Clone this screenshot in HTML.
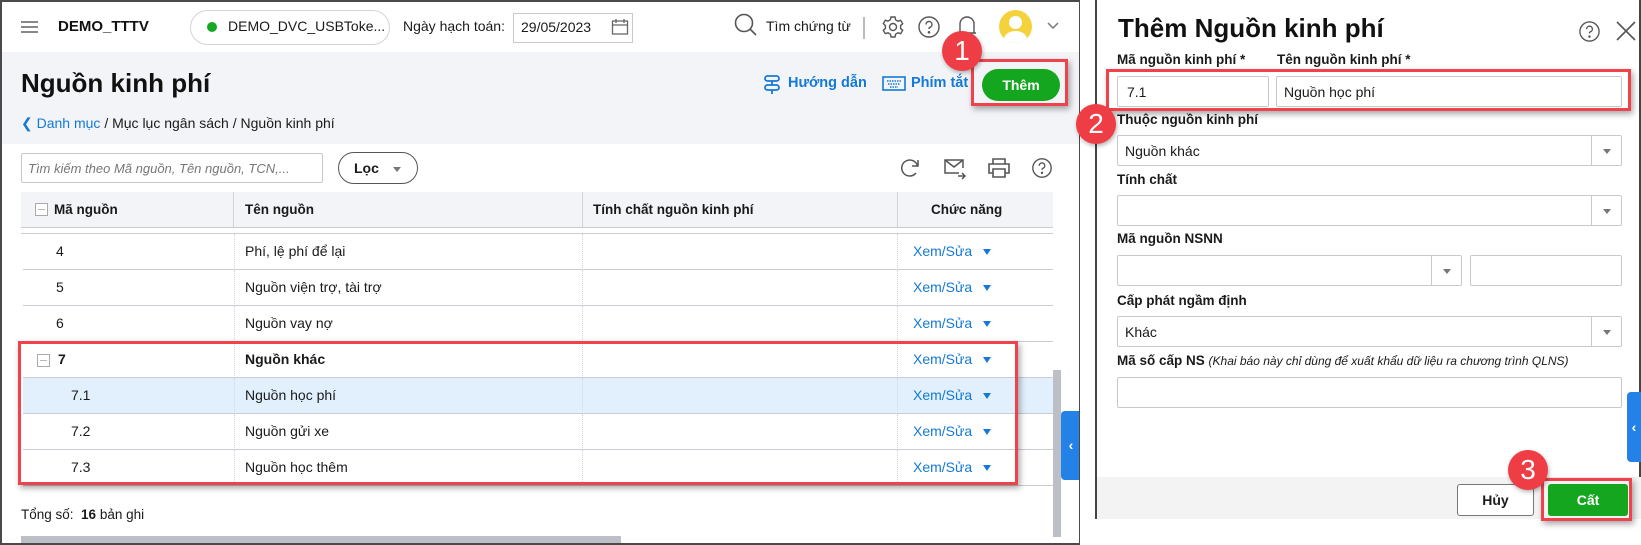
<!DOCTYPE html>
<html><head><meta charset="utf-8"><style>
*{box-sizing:border-box;margin:0;padding:0}
body{width:1641px;height:545px;background:#fff;font-family:"Liberation Sans",sans-serif;color:#1a1a1a;position:relative;overflow:hidden;font-size:14px}
.a{position:absolute}
.lp{left:0;top:0;width:1080px;height:545px;border:2px solid #4a4a4a;border-right:1px solid #4a4a4a;overflow:hidden;background:#fff}
.t{white-space:nowrap}
.row{position:absolute;left:21px;width:1030px;height:36px;border-bottom:1px solid #c9ccd3}
.row span{position:absolute;top:9px;white-space:nowrap}
.xs{color:#1479d6;left:890px}
.tri{position:absolute;left:960px;top:15px;width:0;height:0;border-left:4px solid transparent;border-right:4px solid transparent;border-top:6px solid #1479d6}
.vl{position:absolute;top:0;height:36px;border-left:1px dotted #d4d6db}
.inp{position:absolute;border:1px solid #c7c9ce;background:#fff;border-radius:2px}
.lbl{position:absolute;font-weight:bold;font-size:13.5px;white-space:nowrap}
.dd{position:absolute;right:0;top:0;bottom:0;width:30px;border-left:1px solid #c7c9ce}
.dd:after{content:"";position:absolute;left:11px;top:13px;border-left:4px solid transparent;border-right:4px solid transparent;border-top:5px solid #777}
.redbox{position:absolute;border:3px solid #f0424a;box-shadow:2px 3px 6px rgba(0,0,0,.35)}
.badge{position:absolute;width:40px;height:40px;border-radius:50%;background:#ee3d44;color:#fff;font-size:28px;text-align:center;line-height:40px;box-shadow:1px 2px 4px rgba(0,0,0,.3)}
</style></head><body>
<div class="a lp">
 <!-- top bar -->
 <div class="a" style="left:19px;top:19px;width:17px;height:2px;background:#888;box-shadow:0 5px 0 #888,0 10px 0 #888"></div>
 <div class="a t" style="left:56px;top:16px;font-weight:bold;font-size:15px;color:#111">DEMO_TTTV</div>
 <div class="a" style="left:188px;top:8px;width:200px;height:35px;border:1px solid #d2d4d8;border-radius:18px"></div>
 <div class="a" style="left:205px;top:20px;width:10px;height:10px;border-radius:50%;background:#16a822"></div>
 <div class="a t" style="left:226px;top:16px;font-size:14px">DEMO_DVC_USBToke...</div>
 <div class="a t" style="left:401px;top:16px;font-size:14px">Ngày hạch toán:</div>
 <div class="a" style="left:511px;top:11px;width:120px;height:30px;border:1px solid #c7c9ce"></div>
 <div class="a t" style="left:519px;top:17px;font-size:14px">29/05/2023</div>
 <svg class="a" style="left:609px;top:16px" width="18" height="18" viewBox="0 0 18 18" fill="none" stroke="#666" stroke-width="1.3"><rect x="1.5" y="3" width="15" height="13"/><path d="M1.5 7h15M5 1v4M13 1v4"/></svg>
 <svg class="a" style="left:731px;top:10px" width="26" height="26" viewBox="0 0 26 26" fill="none" stroke="#555" stroke-width="1.6"><circle cx="11" cy="11" r="8.5"/><path d="M17 17l6 6"/></svg>
 <div class="a t" style="left:764px;top:16px;font-size:14px">Tìm chứng từ</div>
 <div class="a" style="left:861px;top:15px;width:2px;height:22px;background:#bbb"></div>
 <svg class="a" style="left:879px;top:13px" width="24" height="24" viewBox="0 0 24 24" fill="none" stroke="#555" stroke-width="1.4"><circle cx="12" cy="12" r="3.5"/><path d="M10 2h4l.6 2.8 2.4 1.4 2.7-.9 2 3.4-2.1 1.9v2.8l2.1 1.9-2 3.4-2.7-.9-2.4 1.4L14 22h-4l-.6-2.8-2.4-1.4-2.7.9-2-3.4 2.1-1.9v-2.8L2.3 8.6l2-3.4 2.7.9 2.4-1.4z"/></svg>
 <svg class="a" style="left:915px;top:13px" width="24" height="24" viewBox="0 0 24 24" fill="none" stroke="#555" stroke-width="1.4"><circle cx="12" cy="12" r="10"/><path d="M9 9.5a3 3 0 1 1 4 2.8c-.7.3-1 .8-1 1.7"/><circle cx="12" cy="17.3" r=".6" fill="#555"/></svg>
 <svg class="a" style="left:953px;top:12px" width="24" height="26" viewBox="0 0 24 26" fill="none" stroke="#555" stroke-width="1.4"><path d="M5 19V10a7 7 0 0 1 14 0v9M3 19h18M10 22h4"/></svg>
 <div class="a" style="left:997px;top:8px;width:33px;height:33px;border-radius:50%;background:#f4d23c;overflow:hidden"><div class="a" style="left:10px;top:6px;width:13px;height:13px;border-radius:50%;background:#fff"></div><div class="a" style="left:5px;top:21px;width:23px;height:16px;border-radius:50%;background:#fff"></div></div>
 <svg class="a" style="left:1045px;top:20px" width="12" height="8" viewBox="0 0 12 8" fill="none" stroke="#777" stroke-width="1.5"><path d="M1 1l5 5 5-5"/></svg>
 <!-- gray header area -->
 <div class="a" style="left:0;top:50px;width:1080px;height:92px;background:#f3f4f8"></div>
 <div class="a t" style="left:19px;top:66px;font-size:26px;font-weight:bold;color:#111">Nguồn kinh phí</div>
 <svg class="a" style="left:761px;top:72px" width="18" height="22" viewBox="0 0 18 22" fill="none" stroke="#1479d6" stroke-width="1.8"><rect x="2" y="2" width="14" height="5" rx="2.5"/><rect x="2" y="11" width="14" height="5" rx="2.5"/><path d="M9 7v4M9 16v4"/></svg>
 <div class="a t" style="left:786px;top:73px;font-size:14.5px;font-weight:bold;color:#1479d6">Hướng dẫn</div>
 <svg class="a" style="left:880px;top:74px" width="24" height="15" viewBox="0 0 24 15" fill="none" stroke="#1479d6" stroke-width="1.6"><rect x="1" y="1" width="22" height="13"/><path d="M5 5h14M6 8h12M8 11h8" stroke-dasharray="1.5 1"/></svg>
 <div class="a t" style="left:909px;top:73px;font-size:14.5px;font-weight:bold;color:#1479d6">Phím tắt</div>
 <div class="a" style="left:980px;top:67px;width:78px;height:32px;border-radius:16px;background:#14a61f;color:#fff;font-weight:bold;font-size:14px;text-align:center;line-height:32px">Thêm</div>
 <div class="a t" style="left:19px;top:113px;font-size:14px"><span style="color:#1479d6">&#10094;&nbsp;Danh mục</span> / Mục lục ngân sách / Nguồn kinh phí</div>
 <!-- toolbar -->
 <div class="a" style="left:19px;top:151px;width:302px;height:30px;border:1px solid #c7c9ce;border-radius:2px"></div>
 <div class="a t" style="left:26px;top:159px;font-size:13px;font-style:italic;color:#777">Tìm kiếm theo Mã nguồn, Tên nguồn, TCN,...</div>
 <div class="a" style="left:336px;top:150px;width:80px;height:32px;border:1px solid #555;border-radius:16px"></div>
 <div class="a t" style="left:352px;top:158px;font-size:14px;font-weight:bold">Lọc</div>
 <div class="a" style="left:391px;top:165px;border-left:4px solid transparent;border-right:4px solid transparent;border-top:5px solid #777"></div>
 <svg class="a" style="left:897px;top:155px" width="22" height="22" viewBox="0 0 22 22" fill="none" stroke="#555" stroke-width="1.5"><path d="M18.5 9A8 8 0 1 0 17 16"/><path d="M19 3v6h-6"/></svg>
 <svg class="a" style="left:941px;top:156px" width="24" height="22" viewBox="0 0 24 22" fill="none" stroke="#555" stroke-width="1.5"><path d="M16 15H2V2h18v8M2 2l9 7 9-7M15 18h7M19 15l3 3-3 3"/></svg>
 <svg class="a" style="left:985px;top:155px" width="24" height="22" viewBox="0 0 24 22" fill="none" stroke="#555" stroke-width="1.6"><path d="M6 7V2h12v5M6 16H2V7h20v9h-4M6 12h12v8H6z"/></svg>
 <svg class="a" style="left:1029px;top:155px" width="22" height="22" viewBox="0 0 24 24" fill="none" stroke="#555" stroke-width="1.5"><circle cx="12" cy="12" r="10"/><path d="M9 9.5a3 3 0 1 1 4 2.8c-.7.3-1 .8-1 1.7"/><circle cx="12" cy="17.3" r=".6" fill="#555"/></svg>
 <!-- table header -->
 <div class="a" style="left:19px;top:190px;width:1032px;height:36px;background:#f3f4f8;border-bottom:1px solid #c9ccd3"></div>
 <div class="a" style="left:33px;top:201px;width:13px;height:13px;border:1px solid #aaa;background:#fff"><div class="a" style="left:2px;top:5px;width:7px;height:1px;background:#bbb"></div></div>
 <div class="a t" style="left:52px;top:200px;font-weight:bold;font-size:13.5px">Mã nguồn</div>
 <div class="a" style="left:231px;top:190px;height:36px;border-left:1px solid #d0d2d7"></div>
 <div class="a t" style="left:243px;top:200px;font-weight:bold;font-size:13.5px">Tên nguồn</div>
 <div class="a" style="left:580px;top:190px;height:36px;border-left:1px solid #d0d2d7"></div>
 <div class="a t" style="left:591px;top:200px;font-weight:bold;font-size:13.5px">Tính chất nguồn kinh phí</div>
 <div class="a" style="left:895px;top:190px;height:36px;border-left:1px solid #d0d2d7"></div>
 <div class="a t" style="left:929px;top:200px;font-weight:bold;font-size:13.5px">Chức năng</div>
 <div class="a" style="left:19px;top:226px;width:1032px;height:6px;border-bottom:1px solid #c9ccd3"></div>
 <!-- rows -->
 <div class="row" style="top:232px"><div class="vl" style="left:211px"></div><div class="vl" style="left:559px"></div><div class="vl" style="left:874px"></div><span style="left:33px">4</span><span style="left:222px">Phí, lệ phí để lại</span><span class="xs">Xem/Sửa</span><i class="tri"></i></div>
 <div class="row" style="top:268px"><div class="vl" style="left:211px"></div><div class="vl" style="left:559px"></div><div class="vl" style="left:874px"></div><span style="left:33px">5</span><span style="left:222px">Nguồn viện trợ, tài trợ</span><span class="xs">Xem/Sửa</span><i class="tri"></i></div>
 <div class="row" style="top:304px"><div class="vl" style="left:211px"></div><div class="vl" style="left:559px"></div><div class="vl" style="left:874px"></div><span style="left:33px">6</span><span style="left:222px">Nguồn vay nợ</span><span class="xs">Xem/Sửa</span><i class="tri"></i></div>
 <div class="row" style="top:340px"><div class="vl" style="left:211px"></div><div class="vl" style="left:559px"></div><div class="vl" style="left:874px"></div><div class="a" style="left:14px;top:12px;width:13px;height:13px;border:1px solid #aaa"><div class="a" style="left:2px;top:5px;width:7px;height:1px;background:#bbb"></div></div><span style="left:35px;font-weight:bold">7</span><span style="left:222px;font-weight:bold">Nguồn khác</span><span class="xs">Xem/Sửa</span><i class="tri"></i></div>
 <div class="row" style="top:376px;background:#e1f0fc"><div class="vl" style="left:211px"></div><div class="vl" style="left:559px"></div><div class="vl" style="left:874px"></div><span style="left:48px">7.1</span><span style="left:222px">Nguồn học phí</span><span class="xs">Xem/Sửa</span><i class="tri"></i></div>
 <div class="row" style="top:412px"><div class="vl" style="left:211px"></div><div class="vl" style="left:559px"></div><div class="vl" style="left:874px"></div><span style="left:48px">7.2</span><span style="left:222px">Nguồn gửi xe</span><span class="xs">Xem/Sửa</span><i class="tri"></i></div>
 <div class="row" style="top:448px"><div class="vl" style="left:211px"></div><div class="vl" style="left:559px"></div><div class="vl" style="left:874px"></div><span style="left:48px">7.3</span><span style="left:222px">Nguồn học thêm</span><span class="xs">Xem/Sửa</span><i class="tri"></i></div>
 <div class="a t" style="left:19px;top:505px;font-size:13.5px">Tổng số:&nbsp; <b>16</b> bản ghi</div>
 <div class="a" style="left:19px;top:534px;width:600px;height:8px;background:#bcc0c6"></div>
 <div class="a" style="left:1051px;top:368px;width:8px;height:167px;background:#bcc0c6"></div>
 <div class="a" style="left:1059px;top:409px;width:20px;height:69px;background:#2381e8;border-radius:4px 0 0 4px;color:#fff;font-size:14px;line-height:69px;text-align:center;font-weight:bold">&#8249;</div>
</div>
<div class="redbox" style="left:971px;top:59px;width:97px;height:47px"></div>
<div class="badge" style="left:942px;top:31px">1</div>
<div class="redbox" style="left:18px;top:341px;width:1000px;height:144px"></div>

<!-- dialog -->
<div class="a" style="left:1095px;top:0;width:546px;height:519px;border:2px solid #444;border-top:none;background:#fff">
 <div class="a t" style="left:21px;top:13px;font-size:26px;font-weight:bold;color:#111">Thêm Nguồn kinh phí</div>
 <svg class="a" style="left:481px;top:20px" width="23" height="23" viewBox="0 0 24 24" fill="none" stroke="#555" stroke-width="1.4"><circle cx="12" cy="12" r="10"/><path d="M9 9.5a3 3 0 1 1 4 2.8c-.7.3-1 .8-1 1.7"/><circle cx="12" cy="17.3" r=".6" fill="#555"/></svg>
 <svg class="a" style="left:518px;top:20px" width="22" height="22" viewBox="0 0 22 22" stroke="#555" stroke-width="1.6"><path d="M2 2l18 18M20 2L2 20"/></svg>
 <div class="lbl" style="left:20px;top:52px">Mã nguồn kinh phí *</div>
 <div class="lbl" style="left:180px;top:52px">Tên nguồn kinh phí *</div>
 <div class="inp" style="left:20px;top:76px;width:152px;height:31px"><span class="a" style="left:9px;top:7px">7.1</span></div>
 <div class="inp" style="left:179px;top:76px;width:346px;height:31px"><span class="a t" style="left:7px;top:7px">Nguồn học phí</span></div>
 <div class="lbl" style="left:20px;top:112px">Thuộc nguồn kinh phí</div>
 <div class="inp" style="left:20px;top:135px;width:505px;height:31px"><span class="a t" style="left:7px;top:7px">Nguồn khác</span><div class="dd"></div></div>
 <div class="lbl" style="left:20px;top:172px">Tính chất</div>
 <div class="inp" style="left:20px;top:195px;width:505px;height:31px"><div class="dd"></div></div>
 <div class="lbl" style="left:20px;top:231px">Mã nguồn NSNN</div>
 <div class="inp" style="left:20px;top:255px;width:345px;height:31px"><div class="dd"></div></div>
 <div class="inp" style="left:373px;top:255px;width:152px;height:31px"></div>
 <div class="lbl" style="left:20px;top:293px">Cấp phát ngầm định</div>
 <div class="inp" style="left:20px;top:316px;width:505px;height:31px"><span class="a t" style="left:7px;top:7px">Khác</span><div class="dd"></div></div>
 <div class="lbl" style="left:20px;top:353px">Mã số cấp NS <span style="font-weight:normal;font-style:italic;font-size:12px">(Khai báo này chỉ dùng để xuất khẩu dữ liệu ra chương trình QLNS)</span></div>
 <div class="inp" style="left:20px;top:377px;width:505px;height:31px"></div>
 <div class="a" style="left:0;top:477px;width:544px;height:42px;background:#f3f3f3"></div>
 <div class="a" style="left:360px;top:484px;width:77px;height:32px;border:1px solid #777;border-radius:3px;background:#fff;text-align:center;line-height:30px;font-weight:bold">Hủy</div>
 <div class="a" style="left:451px;top:484px;width:80px;height:32px;border-radius:3px;background:#14a61f;color:#fff;text-align:center;line-height:32px;font-weight:bold">Cất</div>
 <div class="a" style="left:530px;top:392px;width:14px;height:70px;background:#2381e8;border-radius:4px 0 0 4px;color:#fff;line-height:70px;text-align:center;font-weight:bold">&#8249;</div>
</div>
<div class="redbox" style="left:1106px;top:69px;width:525px;height:42px"></div>
<div class="badge" style="left:1076px;top:104px">2</div>
<div class="redbox" style="left:1541px;top:478px;width:91px;height:43px"></div>
<div class="badge" style="left:1508px;top:450px">3</div>
</body></html>
